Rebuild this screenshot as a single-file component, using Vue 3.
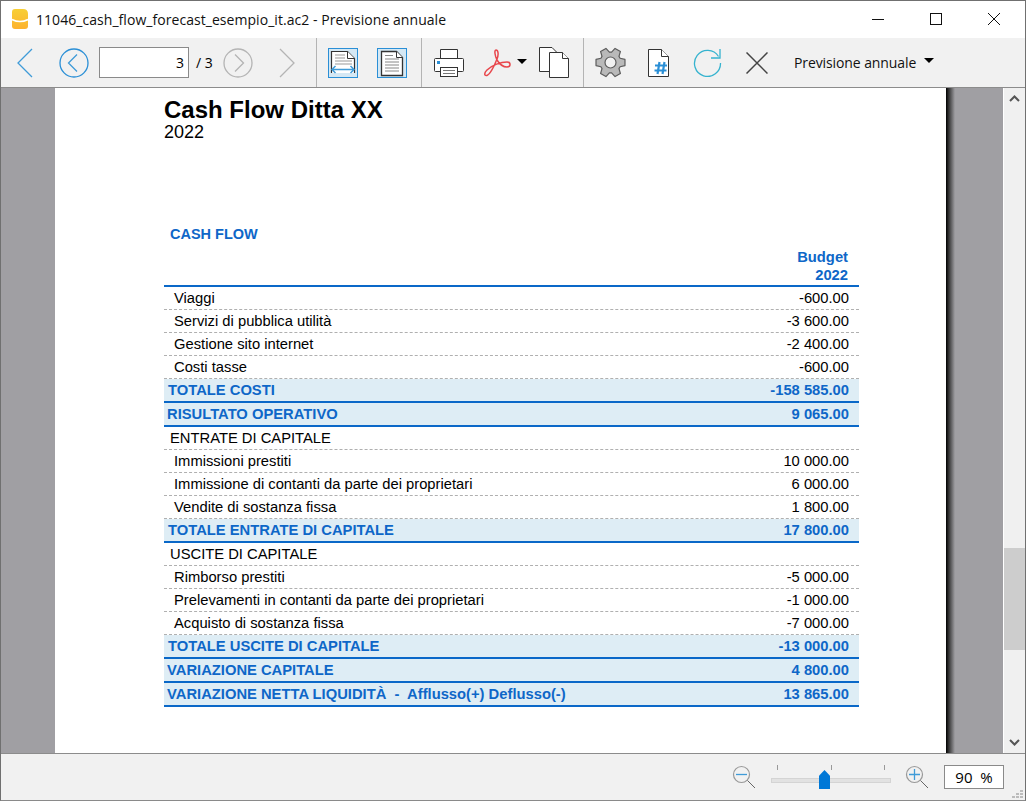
<template>
  <div class="window">
    <header class="titlebar">
      <svg class="app-logo" width="16" height="20" viewBox="0 0 16 20">
        <defs>
          <linearGradient id="logoFill" x1="0" y1="0" x2="0" y2="1">
            <stop offset="0" stop-color="#f7cf35"/>
            <stop offset="1" stop-color="#fdb22e"/>
          </linearGradient>
        </defs>
        <path d="M3 0h8q5 0 5 5v12q0 3-3 3H3q-3 0-3-3V3q0-3 3-3z" fill="url(#logoFill)"/>
        <path d="M0 10.500q8 4 16 0" stroke="#fff" stroke-width="1.600" fill="none"/>
      </svg>
      <span class="title">11046_cash_flow_forecast_esempio_it.ac2 - Previsione annuale</span>
      <div class="win-controls">
        <svg width="14" height="14" viewBox="0 0 14 14"><path d="M1 7.500h12" stroke="#111" fill="none"/></svg>
        <svg width="14" height="14" viewBox="0 0 14 14"><rect x="1.500" y="1.500" width="11" height="11" stroke="#111" fill="none"/></svg>
        <svg width="14" height="14" viewBox="0 0 14 14"><path d="M1 1l12 12M13 1L1 13" stroke="#111" fill="none"/></svg>
      </div>
    </header>

    <nav class="toolbar">
      <div class="tool-group nav-group">
        <svg width="16" height="30" viewBox="0 0 16 30"><path d="M15 1L1 15l14 14" stroke="#3f9bd8" stroke-width="1.300" fill="none"/></svg>
        <svg class="round-btn" width="30" height="30" viewBox="0 0 30 30"><circle cx="15" cy="15" r="14" stroke="#2a8fd6" stroke-width="1.300" fill="none"/><path d="M18 6.500L9.500 15l8.500 8.500" stroke="#3f9bd8" stroke-width="1.300" fill="none"/></svg>
        <div class="page-field">3</div>
        <span class="page-total">/ 3</span>
        <svg class="round-next" width="30" height="30" viewBox="0 0 30 30"><circle cx="15" cy="15" r="14" stroke="#b4b4b4" stroke-width="1.300" fill="none"/><path d="M12 6.500L20.500 15 12 23.500" stroke="#b4b4b4" stroke-width="1.300" fill="none"/></svg>
        <svg class="next" width="16" height="30" viewBox="0 0 16 30"><path d="M1 1l14 14L1 29" stroke="#b4b4b4" stroke-width="1.300" fill="none"/></svg>
      </div>
      <div class="tool-group view-group">
        <div class="toggled">
          <svg width="28" height="28" viewBox="0 0 28 28">
            <path d="M2.500 24V2.500h16l7 7V24" fill="#fff" stroke="#333" stroke-width="1.200"/>
            <path d="M18.500 2.500v7h7" fill="#fff" stroke="#333"/>
            <path d="M6 6h10M6 9h10M6 12h17M6 15h17" stroke="#999"/>
            <path d="M3 20.500h22M6.500 17l-3.500 3.500L6.500 24M21.500 17l3.500 3.500L21.500 24" stroke="#3f9bd8" stroke-width="1.500" fill="none"/>
          </svg>
        </div>
        <div class="toggled">
          <svg width="28" height="28" viewBox="0 0 28 28">
            <path d="M3.500 2.500h15l6 6v18h-21z" fill="#fff" stroke="#333" stroke-width="1.300"/>
            <path d="M18.500 2.500v6h6" fill="#fff" stroke="#333"/>
            <path d="M7 6.500h8M7 10h14M7 13h14M7 16h14M7 19h14M7 22h14" stroke="#888"/>
          </svg>
        </div>
      </div>
      <div class="tool-group print-group">
        <svg width="32" height="30" viewBox="0 0 32 30">
          <path d="M7.500 10V1.500h17V10" fill="#fff" stroke="#333"/>
          <rect x="1.500" y="10.500" width="29" height="13" rx="1" fill="#fff" stroke="#333"/>
          <rect x="4" y="13" width="3" height="3" fill="#2a8fd6"/>
          <rect x="7.500" y="19.500" width="17" height="9" fill="#fff" stroke="#333"/>
          <path d="M10 22.500h12M10 25.500h12" stroke="#777"/>
        </svg>
        <div class="pdf-btn">
          <svg width="29" height="30" viewBox="0 0 29 30">
            <path d="M2 27c3 3 8-6 12-16 2-5 1-9-1-9s-1 6 1 10c3 5 6 7 10 7 4 0 4-5 0-5-6 0-15 3-20 8-2 2-3 3-2 5z" fill="none" stroke="#e8474c" stroke-width="1.500"/>
          </svg>
          <span class="caret"></span>
        </div>
        <svg width="30" height="31" viewBox="0 0 30 31">
          <path d="M10 24.500H.5V.5h12.500l5 5" fill="#fff" stroke="#333"/>
          <path d="M10.500 5.500h13l6 6v19h-19z" fill="#fff" stroke="#333"/>
          <path d="M23.500 5.500v6h6" fill="#fff" stroke="#333"/>
        </svg>
      </div>
      <div class="tool-group misc-group">
        <svg width="31" height="31" viewBox="0 0 31 31">
          <path :d="gearPath" fill="#b9b9b9" stroke="#5c5c5c" stroke-width="1.200" stroke-linejoin="round"/>
          <circle cx="15.500" cy="15.500" r="5.500" fill="#f1f1f1" stroke="#5c5c5c" stroke-width="1.200"/>
        </svg>
        <svg class="hash-doc" width="22" height="28" viewBox="0 0 22 28">
          <path d="M.5.500h13l7 7v20H.5z" fill="#fff" stroke="#333"/>
          <path d="M13.500.500v7h7" fill="#fff" stroke="#333"/>
          <path d="M11.500 13l-2 12M16.500 13l-2 12M7 16.500h12M6.500 21.500h12" stroke="#2a8fd6" stroke-width="2.200" fill="none"/>
        </svg>
        <svg class="refresh" width="29" height="29" viewBox="0 0 29 29">
          <path d="M25.500 8.500A13 13 0 1 0 27.500 15" stroke="#35b3cf" stroke-width="1.300" fill="none"/>
          <path d="M27 1v9h-9" stroke="#35b3cf" stroke-width="1.300" fill="none"/>
        </svg>
        <svg class="close-report" width="22" height="22" viewBox="0 0 22 22"><path d="M.5.500l21 21M21.500.500l-21 21" stroke="#444" stroke-width="1.500" fill="none"/></svg>
        <div class="report-select">
          <span>Previsione annuale</span>
          <span class="caret"></span>
        </div>
      </div>
    </nav>

    <main class="viewer">
      <section class="page">
        <h1>Cash Flow Ditta XX</h1>
        <div class="year">2022</div>
        <div class="section-title">CASH FLOW</div>
        <div class="col-head">Budget<br>2022</div>
        <div class="table">
          <div
            v-for="row in rows"
            :key="row.label"
            class="row"
            :class="row.kind"
          >
            <span class="label">{{ row.label }}</span>
            <span class="amount">{{ row.amount }}</span>
          </div>
        </div>
      </section>
      <div class="page-shadow"></div>
      <aside class="scrollbar">
        <svg width="13" height="9" viewBox="0 0 13 9"><path d="M2 7l4.500-4.500L11 7" stroke="#555" stroke-width="2" fill="none"/></svg>
        <div class="track"><div class="thumb"></div></div>
        <svg width="13" height="9" viewBox="0 0 13 9"><path d="M2 2l4.500 4.500L11 2" stroke="#555" stroke-width="2" fill="none"/></svg>
      </aside>
    </main>

    <footer class="statusbar">
      <svg width="24" height="24" viewBox="0 0 24 24">
        <circle cx="9.500" cy="9.500" r="8" fill="none" stroke="#999" stroke-width="1.200"/>
        <path d="M15.500 15.500l7.500 7.500" stroke="#666"/>
        <path d="M4 9.500h11" stroke="#3f9bd8" stroke-width="1.300"/>
      </svg>
      <div class="slider">
        <div class="ticks"><i></i><i></i><i></i></div>
        <div class="groove"></div>
        <span class="handle"></span>
      </div>
      <svg width="24" height="24" viewBox="0 0 24 24">
        <circle cx="9.500" cy="9.500" r="8" fill="none" stroke="#999" stroke-width="1.200"/>
        <path d="M15.500 15.500l7.500 7.500" stroke="#666"/>
        <path d="M4 9.500h11M9.500 4v11" stroke="#3f9bd8" stroke-width="1.300"/>
      </svg>
      <div class="zoom-field">90&nbsp; %</div>
      <svg class="grip" width="11" height="8" viewBox="0 0 11 8">
        <path d="M8 0h3v2H8zM4 3h3v2H4zM8 3h3v2H8zM0 6h3v2H0zM4 6h3v2H4zM8 6h3v2H8z" fill="#bcbcbc"/>
      </svg>
    </footer>
  </div>
</template>

<script setup>
const rows = [
  { label: 'Viaggi', amount: '-600.00', kind: 'item' },
  { label: 'Servizi di pubblica utilità', amount: '-3 600.00', kind: 'item' },
  { label: 'Gestione sito internet', amount: '-2 400.00', kind: 'item' },
  { label: 'Costi tasse', amount: '-600.00', kind: 'item' },
  { label: 'TOTALE COSTI', amount: '-158 585.00', kind: 'total' },
  { label: 'RISULTATO OPERATIVO', amount: '9 065.00', kind: 'result' },
  { label: 'ENTRATE DI CAPITALE', amount: '', kind: 'group' },
  { label: 'Immissioni prestiti', amount: '10 000.00', kind: 'item' },
  { label: 'Immissione di contanti da parte dei proprietari', amount: '6 000.00', kind: 'item' },
  { label: 'Vendite di sostanza fissa', amount: '1 800.00', kind: 'item' },
  { label: 'TOTALE ENTRATE DI CAPITALE', amount: '17 800.00', kind: 'total' },
  { label: 'USCITE DI CAPITALE', amount: '', kind: 'group' },
  { label: 'Rimborso prestiti', amount: '-5 000.00', kind: 'item' },
  { label: 'Prelevamenti in contanti da parte dei proprietari', amount: '-1 000.00', kind: 'item' },
  { label: 'Acquisto di sostanza fissa', amount: '-7 000.00', kind: 'item' },
  { label: 'TOTALE USCITE DI CAPITALE', amount: '-13 000.00', kind: 'total' },
  { label: 'VARIAZIONE CAPITALE', amount: '4 800.00', kind: 'result' },
  { label: 'VARIAZIONE NETTA LIQUIDITÀ  -  Afflusso(+) Deflusso(-)', amount: '13 865.00', kind: 'result' }
]

// six teeth, one pointing right
const gearPoint = (r, deg) => {
  const a = (deg * Math.PI) / 180
  return `${(15.5 + r * Math.cos(a)).toFixed(2)} ${(15.5 + r * Math.sin(a)).toFixed(2)}`
}
const gearPath = [0, 60, 120, 180, 240, 300]
  .map((deg) => `L${gearPoint(10.5, deg - 24)}L${gearPoint(14.8, deg - 12)}L${gearPoint(14.8, deg + 12)}L${gearPoint(10.5, deg + 24)}`)
  .join('')
  .replace('L', 'M') + 'Z'
</script>

<style>
html, body {
  margin: 0;
  background: #fff;
}
</style>

<style scoped>
.window {
  width: 1026px;
  height: 801px;
  box-sizing: border-box;
  border: 1px solid #707070;
  border-bottom-color: #8a8a8a;
  display: flex;
  flex-direction: column;
  overflow: hidden;
  font-family: "Liberation Sans", Arial, sans-serif;
  color: #000;
}

.titlebar {
  height: 37px;
  flex: none;
  box-sizing: border-box;
  display: flex;
  align-items: center;
  padding: 0 0 1px 11px;
  background: #fff;
}

.title {
  margin-left: 8px;
  font-family: "Open Sans", sans-serif;
  font-size: 14px;
  color: #111;
  letter-spacing: 0.05px;
}

.win-controls {
  margin-left: auto;
  display: flex;
  gap: 44px;
  padding-right: 24px;
}

.toolbar {
  height: 49px;
  flex: none;
  display: flex;
  align-items: stretch;
  background: #f1f1f1;
  border-bottom: 1px solid #8c8c8c;
  box-sizing: content-box;
}

.tool-group {
  display: flex;
  align-items: center;
  border-right: 1px solid #b4b4b4;
  box-sizing: border-box;
}

.nav-group {
  width: 316px;
  padding-left: 16px;
}

.round-btn {
  margin-left: 26px;
}

.page-field {
  width: 90px;
  height: 31px;
  margin-left: 10px;
  box-sizing: border-box;
  border: 1px solid #8a8a8a;
  background: #fff;
  text-align: right;
  padding-right: 4px;
  font-family: "Open Sans", sans-serif;
  font-size: 14px;
  line-height: 29px;
}

.page-total {
  margin-left: 7px;
  font-family: "Open Sans", sans-serif;
  font-size: 14px;
}

.round-next {
  margin-left: 10px;
}

.next {
  margin-left: 26px;
}

.view-group {
  width: 105px;
  padding-left: 11px;
  gap: 19px;
}

.toggled {
  width: 28px;
  height: 28px;
  border: 1px solid #2a8fd6;
  background: #d5e8f4;
}

.toggled svg {
  display: block;
}

.print-group {
  width: 162px;
  padding-left: 11px;
}

.pdf-btn {
  display: flex;
  align-items: center;
  margin-left: 18px;
  width: 56px;
}

.caret {
  width: 0;
  height: 0;
  border-left: 5px solid transparent;
  border-right: 5px solid transparent;
  border-top: 5px solid #000;
}

.pdf-btn .caret {
  margin-left: 5px;
  margin-top: -3px;
}

.misc-group {
  flex: 1;
  border-right: 0;
  padding-left: 11px;
}

.hash-doc {
  margin-left: 22px;
}

.refresh {
  margin-left: 23px;
}

.close-report {
  margin-left: 24px;
}

.report-select {
  display: flex;
  align-items: center;
  margin-left: 26px;
  font-family: "Open Sans", sans-serif;
  font-size: 14px;
  letter-spacing: -0.1px;
  color: #111;
}

.report-select .caret {
  margin-left: 8px;
  margin-top: -5px;
}

.viewer {
  flex: 1;
  min-height: 0;
  display: flex;
  background: #a09fa3;
  padding-left: 54px;
}

.page {
  width: 891px;
  height: 665px;
  flex: none;
  box-sizing: border-box;
  background: #fff;
  padding: 8px 87px 0 109px;
}

.page-shadow {
  width: 9px;
  margin-right: auto;
  background: linear-gradient(90deg, #000, #333 30%, #a09fa3);
}

h1 {
  margin: 0;
  font-size: 24px;
  line-height: 27px;
  font-weight: 700;
}

.year {
  font-size: 18px;
  line-height: 19px;
}

.section-title {
  margin-top: 83px;
  padding-left: 6px;
  color: #0e67c8;
  font-size: 14.500px;
  line-height: 18px;
  font-weight: 700;
}

.col-head {
  margin-top: 5px;
  padding-right: 11px;
  text-align: right;
  color: #0e67c8;
  font-size: 14.750px;
  line-height: 18px;
  font-weight: 700;
}

.table {
  border-top: 2px solid #0a68c8;
  margin-top: 1px;
}

.row {
  display: flex;
  justify-content: space-between;
  align-items: center;
  box-sizing: border-box;
  height: 23px;
  font-size: 14.750px;
  border-bottom: 1px dashed #b0b0b0;
}

.amount {
  padding-right: 10px;
}

.item .label {
  padding-left: 10px;
}

.group .label {
  padding-left: 6px;
}

.total,
.result {
  height: 24px;
  background: #deedf5;
  color: #0e67c8;
  font-weight: 700;
  border-bottom: 2px solid #0a68c8;
}

.total .label {
  padding-left: 4px;
}

.result .label {
  padding-left: 3px;
  white-space: pre;
}

.scrollbar {
  width: 22px;
  flex: none;
  display: flex;
  flex-direction: column;
  align-items: center;
  background: #f0f0f0;
  border-left: 1px solid #fff;
  padding: 6px 0;
  box-sizing: border-box;
}

.track {
  flex: 1;
  width: 100%;
  padding-top: 445px;
  box-sizing: border-box;
}

.thumb {
  height: 102px;
  background: #cdcdcd;
}

.statusbar {
  position: relative;
  height: 47px;
  flex: none;
  display: flex;
  align-items: center;
  justify-content: flex-end;
  background: #f1f1f1;
  border-top: 1px solid #8c8c8c;
  box-sizing: border-box;
  padding-right: 21px;
}

.slider {
  position: relative;
  width: 120px;
  height: 24px;
  margin: 0 14px 0 15px;
}

.ticks {
  display: flex;
  justify-content: space-between;
  padding: 0 6px;
}

.ticks i {
  display: block;
  width: 1px;
  height: 5px;
  background: #999;
}

.groove {
  height: 3px;
  margin-top: 8px;
  background: #e2e2e2;
  border: 1px solid #d4d4d4;
}

.handle {
  position: absolute;
  left: 48px;
  top: 5px;
  width: 11px;
  height: 19px;
  background: #0078d7;
  clip-path: polygon(50% 0, 100% 30%, 100% 100%, 0 100%, 0 30%);
}

.zoom-field {
  width: 60px;
  height: 24px;
  margin-left: 15px;
  box-sizing: border-box;
  border: 1px solid #8a8a8a;
  background: #fff;
  text-align: center;
  font-family: "Open Sans", sans-serif;
  font-size: 15px;
  line-height: 22px;
}

.grip {
  position: absolute;
  right: 2px;
  bottom: 2px;
}
</style>
